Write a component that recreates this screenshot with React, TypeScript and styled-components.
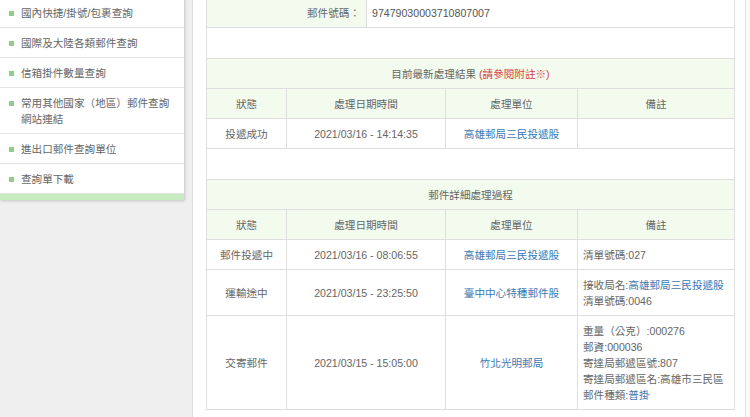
import styled, { createGlobalStyle } from "styled-components"

const GlobalStyle = createGlobalStyle`
  html, body {
    margin: 0;
    padding: 0;
    background: #efefef;
  }

  body {
    font-family: "Liberation Sans", "Noto Sans CJK TC", Arial, sans-serif;
    font-size: 10.6px;
    color: #666666;
  }
`

const menuItems = [
  "國內快捷/掛號/包裹查詢",
  "國際及大陸各類郵件查詢",
  "信箱掛件數量查詢",
  "常用其他國家（地區）郵件查詢網站連結",
  "進出口郵件查詢單位",
  "查詢單下載",
]

// a remark line: plain label, optionally followed by a linked value
type Remark = { text: string; link?: string }

type Track = {
  status: string
  time: string
  unit: string
  notes: Remark[]
}

const latest: Track = {
  status: "投遞成功",
  time: "2021/03/16 - 14:14:35",
  unit: "高雄郵局三民投遞股",
  notes: [],
}

const history: Track[] = [
  {
    status: "郵件投遞中",
    time: "2021/03/16 - 08:06:55",
    unit: "高雄郵局三民投遞股",
    notes: [{ text: "清單號碼:027" }],
  },
  {
    status: "運輸途中",
    time: "2021/03/15 - 23:25:50",
    unit: "臺中中心特種郵件股",
    notes: [
      { text: "接收局名:", link: "高雄郵局三民投遞股" },
      { text: "清單號碼:0046" },
    ],
  },
  {
    status: "交寄郵件",
    time: "2021/03/15 - 15:05:00",
    unit: "竹北光明郵局",
    notes: [
      { text: "重量（公克）:000276" },
      { text: "郵資:000036" },
      { text: "寄達局郵遞區號:807" },
      { text: "寄達局郵遞區名:高雄市三民區" },
      { text: "郵件種類:", link: "普掛" },
    ],
  },
]

function TrackTable({ title, rows }: { title: React.ReactNode; rows: Track[] }) {
  return (
    <Table>
      <colgroup>
        <col style={{ width: 80 }} />
        <col style={{ width: 159 }} />
        <col style={{ width: 132 }} />
        <col />
      </colgroup>
      <tbody>
        <tr>
          <Head colSpan={4}>{title}</Head>
        </tr>
        <tr>
          <Head>狀態</Head>
          <Head>處理日期時間</Head>
          <Head>處理單位</Head>
          <Head>備註</Head>
        </tr>
        {rows.map((row) => (
          <tr key={row.time}>
            <Cell>{row.status}</Cell>
            <Cell>{row.time}</Cell>
            <Cell>
              <Link>{row.unit}</Link>
            </Cell>
            <Cell $left>
              {row.notes.map((note, i) => (
                <div key={i}>
                  {note.text}
                  {note.link && <Link>{note.link}</Link>}
                </div>
              ))}
            </Cell>
          </tr>
        ))}
      </tbody>
    </Table>
  )
}

export default function App() {
  return (
    <>
      <GlobalStyle />
      <Page>
        <Side>
          <Menu>
            {menuItems.map((item) => (
              <MenuItem key={item}>
                <Bullet />
                <span>{item}</span>
              </MenuItem>
            ))}
            <MenuFoot />
          </Menu>
        </Side>

        <Main>
          <Table>
            <tbody>
              <tr>
                <Label>郵件號碼：</Label>
                <Value>97479030003710807007</Value>
              </tr>
            </tbody>
          </Table>
          <Blank />
          <TrackTable
            title={
              <>
                目前最新處理結果 <Note>(請參閱附註※)</Note>
              </>
            }
            rows={[latest]}
          />
          <Blank />
          <TrackTable title="郵件詳細處理過程" rows={history} />
        </Main>
        <Gutter />
      </Page>
    </>
  )
}

const Page = styled.div`
  display: flex;
  align-items: stretch;
  height: 420px;
  margin-top: -3px;
  overflow: hidden;
`

const Side = styled.aside`
  width: 192px;
  flex-shrink: 0;
  padding-top: 1px;
  background: #efefef;
`

const Menu = styled.nav`
  width: 184px;
  background: #ffffff;
  box-shadow: 1px 1px 3px rgba(0, 0, 0, 0.18);
`

const MenuItem = styled.div`
  display: flex;
  gap: 7px;
  padding: 7px 10px 6px 9px;
  line-height: 16px;
  border-bottom: 1px solid #e4e4e4;
  color: #666666;

  > span {
    flex: 1;
  }
`

const Bullet = styled.i`
  flex-shrink: 0;
  width: 5px;
  height: 5px;
  margin-top: 6px;
  background: #90cc8c;
`

const MenuFoot = styled.div`
  height: 6px;
  background: #c8ecc1;
`

const Main = styled.main`
  flex: 1;
  display: flex;
  flex-direction: column;
  padding: 0 10px 0 13px;
  background: #ffffff;
  border-left: 1px solid #dcdcdc;
  border-right: 1px solid #e2e2e2;
`

const Gutter = styled.div`
  width: 4px;
  flex-shrink: 0;
  background: #fafafa;
`

const Table = styled.table`
  width: 100%;
  border-collapse: collapse;
  table-layout: fixed;
  line-height: 16px;
`

const Head = styled.th`
  padding: 7px 5px 6px;
  font-weight: normal;
  text-align: center;
  background: #f3fbee;
  border: 1px solid #dedede;
  color: #666666;
`

const Cell = styled.td<{ $left?: boolean }>`
  padding: 7px 5px 6px;
  text-align: ${({ $left }) => ($left ? "left" : "center")};
  vertical-align: middle;
  border: 1px solid #dedede;
  color: #666666;
`

const Label = styled.th`
  width: 147px;
  padding: 7px 6px 6px;
  font-weight: normal;
  text-align: right;
  background: #f3fbee;
  border: 1px solid #dedede;
  color: #666666;
`

const Value = styled.td`
  padding: 7px 5px 6px;
  border: 1px solid #dedede;
  color: #555555;
`

const Blank = styled.div`
  height: 30px;
  border: 1px solid #dedede;
  border-top: none;
  border-bottom: none;
`

const Link = styled.a`
  color: #3a78b5;
  text-decoration: none;
  cursor: pointer;
`

const Note = styled.span`
  color: #d9403a;
`
